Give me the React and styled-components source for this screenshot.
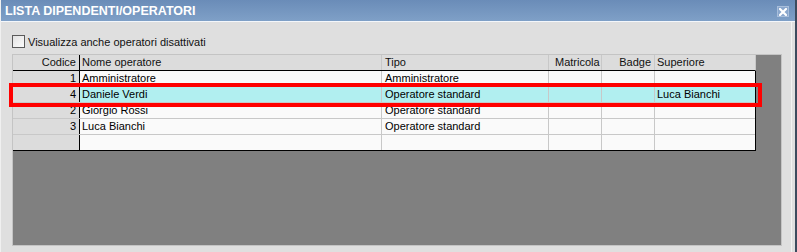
import React from "react";
import styled, { createGlobalStyle } from "styled-components";

const Global = createGlobalStyle`
  html, body { margin: 0; padding: 0; background: #dfdfdf; }
  body { font-family: "Liberation Sans", Arial, sans-serif; }
`;

const Window = styled.div`
  position: relative;
  width: 797px;
  height: 252px;
  box-sizing: border-box;
  border-right: 2px solid #3c4b5e;
  border-left: 1px solid #f0f0f0;
  background: #dfdfdf;
  display: flex;
  flex-direction: column;
  overflow: hidden;
`;

const TitleBar = styled.div`
  height: 21px;
  flex: 0 0 21px;
  border-bottom: 1px solid #f4f7fb;
  background: linear-gradient(#6a8cb8, #7fa0c7);
  display: flex;
  align-items: center;
  justify-content: space-between;
  padding: 0 6px 0 4px;
`;

const Title = styled.span`
  color: #ffffff;
  font-weight: bold;
  font-size: 12.5px;
  line-height: 21px;
  padding-top: 1px;
`;

const CloseBtn = styled.div`
  width: 10px;
  height: 9px;
  margin-top: 2px;
  border: 1px solid #a8bedb;
  background: #8aa7cd;
  display: flex;
  align-items: center;
  justify-content: center;
`;

const Body = styled.div`
  flex: 1;
  margin-right: 3px;
  border-right: 1px solid #f2f2f2;
  padding: 13px 9px 6px 11px;
  display: flex;
  flex-direction: column;
  gap: 6px;
`;

const CheckRow = styled.label`
  display: flex;
  align-items: center;
  gap: 3px;
  height: 13px;
  font-size: 11px;
  color: #111;
`;

const Box = styled.span`
  width: 11px;
  height: 11px;
  border: 1px solid #5a5a5a;
  background: linear-gradient(135deg, #e2e2e2, #fbfbfb);
`;

const Panel = styled.div`
  height: 190px;
  border: 1px solid #c4c4c4;
  background: #808080;
  display: flex;
  flex-direction: column;
  align-items: flex-start;
`;

const cols = "67px 302px 167px 53px 53px 100px";

const Header = styled.div`
  display: grid;
  grid-template-columns: ${cols};
  width: 743px;
  box-sizing: border-box;
  background: #dcdcdc;
  border-bottom: 1px solid #000;
  border-right: 1px solid #c8c8c8;
`;

const HeadCell = styled.div`
  height: 15px;
  line-height: 15px;
  font-size: 11px;
  color: #111;
  white-space: nowrap;
  overflow: hidden;
  text-align: ${(p) => (p.$right ? "right" : "left")};
  padding: ${(p) => (p.$right ? "0 3px 0 0" : `0 0 0 ${p.$pad ?? 2}px`)};
  border-right: 1px solid ${(p) => (p.$dark ? "#000" : "#c8c8c8")};
  &:last-child { border-right: none; }
`;

const Rows = styled.div`
  width: 743px;
  box-sizing: border-box;
  border-right: 1px solid #000;
  border-bottom: 1px solid #000;
`;

const Row = styled.div`
  display: grid;
  grid-template-columns: ${cols};
  border-bottom: 1px solid #c8c8c8;
  &:last-child { border-bottom: none; }
`;

const Cell = styled.div`
  height: 15px;
  line-height: 15px;
  font-size: 11px;
  color: #000;
  white-space: nowrap;
  overflow: hidden;
  background: ${(p) => (p.$code ? "#dcdcdc" : p.$sel ? "#b1eff0" : "#fafafa")};
  text-align: ${(p) => (p.$code ? "right" : "left")};
  padding: ${(p) => (p.$code ? "0 3px 0 0" : `0 0 0 ${p.$pad ?? 2}px`)};
  border-right: 1px solid ${(p) => (p.$code ? "#000" : "#c8c8c8")};
  &:last-child { border-right: none; }
`;

const Highlight = styled.div`
  position: absolute;
  left: 8px;
  top: 83px;
  width: 745px;
  height: 16px;
  border: 4px solid #ff0000;
  pointer-events: none;
`;

const data = [
  { code: "1", name: "Amministratore", tipo: "Amministratore", sup: "" },
  { code: "4", name: "Daniele Verdi", tipo: "Operatore standard", sup: "Luca Bianchi", sel: true },
  { code: "2", name: "Giorgio Rossi", tipo: "Operatore standard", sup: "" },
  { code: "3", name: "Luca Bianchi", tipo: "Operatore standard", sup: "" },
  { code: "", name: "", tipo: "", sup: "" },
];

export default function App() {
  return (
    <>
      <Global />
      <Window>
        <TitleBar>
          <Title>LISTA DIPENDENTI/OPERATORI</Title>
          <CloseBtn>
            <svg width="8" height="8" viewBox="0 0 8 8">
              <path d="M1 1 L7 7 M7 1 L1 7" stroke="#fff" strokeWidth="2.2" strokeLinecap="square" />
            </svg>
          </CloseBtn>
        </TitleBar>
        <Body>
          <CheckRow>
            <Box />
            <span>Visualizza anche operatori disattivati</span>
          </CheckRow>
          <Panel>
            <Header>
              <HeadCell $right $dark>Codice</HeadCell>
              <HeadCell>Nome operatore</HeadCell>
              <HeadCell $pad={3}>Tipo</HeadCell>
              <HeadCell $pad={6}>Matricola</HeadCell>
              <HeadCell $right>Badge</HeadCell>
              <HeadCell>Superiore</HeadCell>
            </Header>
            <Rows>
              {data.map((r, i) => (
                <Row key={i}>
                  <Cell $code>{r.code}</Cell>
                  <Cell $sel={r.sel}>{r.name}</Cell>
                  <Cell $sel={r.sel} $pad={3}>{r.tipo}</Cell>
                  <Cell $sel={r.sel} />
                  <Cell $sel={r.sel} />
                  <Cell $sel={r.sel}>{r.sup}</Cell>
                </Row>
              ))}
            </Rows>
          </Panel>
        </Body>
        <Highlight />
      </Window>
    </>
  );
}
